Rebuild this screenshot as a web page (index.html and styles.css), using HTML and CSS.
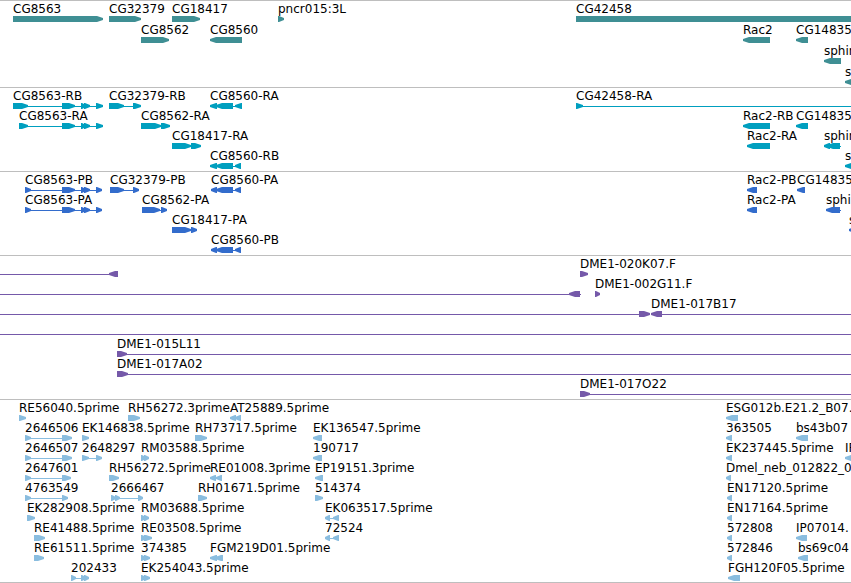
FILE: index.html
```
<!DOCTYPE html>
<html lang="en">
<head>
<meta charset="utf-8">
<title>Genome tracks</title>
<link rel="stylesheet" href="styles.css">
</head>
<body>
<main class="browser">
  <section class="track genes" id="genes" aria-label="Genes"></section>
  <section class="track transcripts" id="transcripts" aria-label="Transcripts"></section>
  <section class="track proteins" id="proteins" aria-label="Coding sequences"></section>
  <section class="track clones" id="clones" aria-label="Clones"></section>
  <section class="track ests" id="ests" aria-label="ESTs"></section>
</main>
<script src="script.js"></script>
</body>
</html>
```

FILE: styles.css
```
body {
  margin: 0;
  background: #fff;
  color: #000;
  font-family: "DejaVu Sans", sans-serif;
  font-size: 12px;
  line-height: 16px;
}

.browser {
  display: flex;
  flex-direction: column;
  border-bottom: 1px solid #bebebe;
}

.track {
  --row: 20px;
  display: grid;
  grid-auto-rows: var(--row);
  padding-bottom: 3px;
  border-top: 1px solid #bebebe;
  overflow: hidden;
}

.genes {
  --row: 21px;
  padding-bottom: 2px;
  color: #3f8f94;
}

.transcripts { color: #009fbf; }
.proteins { color: #336ccc; }
.clones { color: #7559a9; }

.ests {
  padding-bottom: 2px;
  color: #8abddf;
}

.row {
  position: relative;
}

.shapes {
  display: block;
  width: 100%;
  height: 22px;
  overflow: visible;
  fill: currentColor;
}

.label {
  position: absolute;
  top: 0;
  color: #000;
  white-space: nowrap;
}
```

FILE: script.js
```
// Each feature: [label position, name, strand, exons, optional line extent]
const END = 4000;
const tracks = {
  genes: [
    [[13, "CG8563", 1, [[13, 103]]], [109, "CG32379", 1, [[109, 141]]], [172, "CG18417", 1, [[172, 200]]],
     [278, "pncr015:3L", 1, [[278, 284]]], [576, "CG42458", 1, [[576, END]]]],
    [[141, "CG8562", 1, [[141, 169]]], [210, "CG8560", -1, [[210, 242]]], [743, "Rac2", -1, [[743, 770]]],
     [796, "CG14835", -1, [[796, 808]]]],
    [[824, "sphin", -1, [[824, 841]]]],
    [[845, "s", -1, [[845, 856]]]]
  ],
  transcripts: [
    [[13, "CG8563-RB", 1, [[13, 28], [62, 75], [81, 86], [84, 90], [96, 103]]],
     [109, "CG32379-RB", 1, [[109, 124], [133, 141]]],
     [210, "CG8560-RA", -1, [[210, 217], [216, 233], [235, 242]]],
     [576, "CG42458-RA", 1, [[576, 583]], [576, END]]],
    [[19, "CG8563-RA", 1, [[19, 28], [62, 75], [81, 86], [84, 90], [96, 103]]],
     [141, "CG8562-RA", 1, [[141, 161], [161, 170]]],
     [743, "Rac2-RB", -1, [[743, 770]]], [796, "CG14835", -1, [[796, 808]]]],
    [[172, "CG18417-RA", 1, [[172, 191], [191, 201]]], [747, "Rac2-RA", -1, [[747, 770]]],
     [824, "sphin", -1, [[824, 830], [827, 840]], [824, 841]]],
    [[210, "CG8560-RB", -1, [[210, 217], [216, 233], [235, 241]]], [845, "s", -1, [[845, 856]]]]
  ],
  proteins: [
    [[25, "CG8563-PB", 1, [[25, 31], [62, 75], [81, 86], [84, 90], [96, 102]]],
     [110, "CG32379-PB", 1, [[110, 124], [133, 139]]],
     [211, "CG8560-PA", -1, [[211, 217], [216, 233], [235, 241]]],
     [747, "Rac2-PB", -1, [[747, 757]]], [797, "CG14835", -1, [[797, 805]]]],
    [[25, "CG8563-PA", 1, [[25, 31], [62, 75], [81, 86], [84, 90], [96, 102]]],
     [142, "CG8562-PA", 1, [[142, 160], [161, 167]]],
     [747, "Rac2-PA", -1, [[747, 757]]], [826, "sphi", -1, [[826, 840]], [826, 841]]],
    [[172, "CG18417-PA", 1, [[172, 191], [191, 197]]], [849, "s", -1, [[849, 860]]]],
    [[211, "CG8560-PB", -1, [[211, 217], [216, 233], [235, 241]]]]
  ],
  clones: [
    [[0, "", -1, [[109, 118]], [0, 118]], [580, "DME1-020K07.F", 1, [[580, 588]]]],
    [[0, "", -1, [[569, 580]], [0, 581]], [595, "DME1-002G11.F", 1, [[595, 600]]]],
    [[0, "", 1, [[639, 650]], [0, 650]], [651, "DME1-017B17", -1, [[651, 662]], [651, END]]],
    [[0, "", 1, [], [0, END]]],
    [[117, "DME1-015L11", 1, [[117, 127]], [117, END]]],
    [[117, "DME1-017A02", 1, [[117, 128]], [117, END]]],
    [[580, "DME1-017O22", 1, [[580, 590]], [580, END]]]
  ],
  ests: [
    [[19, "RE56040.5prime", 1, [[19, 26]]], [128, "RH56272.3prime", 1, [[128, 140]]],
     [230, "AT25889.5prime", -1, [[230, 236], [235, 241]]], [726, "ESG012b.E21.2_B07.", -1, [[726, 738]]]],
    [[25, "2646506", 1, [[25, 31], [62, 72]]], [82, "EK146838.5prime", 1, [[82, 89]]],
     [195, "RH73717.5prime", 1, [[195, 207]]], [313, "EK136547.5prime", -1, [[313, 322]]],
     [726, "363505", -1, [[726, 732]]], [796, "bs43b07", -1, [[796, 808]]]],
    [[25, "2646507", 1, [[25, 31], [62, 72]]], [82, "2648297", 1, [[82, 89], [96, 102]]],
     [141, "RM03588.5prime", 1, [[141, 146], [144, 149]]], [313, "190717", -1, [[313, 322]]],
     [726, "EK237445.5prime", -1, [[726, 732]]], [845, "IP", -1, [[845, 856]]]],
    [[25, "2647601", 1, [[25, 31], [62, 71]]], [109, "RH56272.5prime", 1, [[109, 119]]],
     [210, "RE01008.3prime", -1, [[210, 216], [216, 222]]], [315, "EP19151.3prime", -1, [[315, 323]]],
     [726, "Dmel_neb_012822_0", -1, [[726, 731]]]],
    [[25, "4763549", 1, [[25, 31], [62, 68]]], [111, "2666467", 1, [[111, 116], [115, 120], [138, 143]]],
     [198, "RH01671.5prime", 1, [[198, 207]]], [315, "514374", 1, [[315, 323]]],
     [727, "EN17120.5prime", -1, [[727, 732]]]],
    [[27, "EK282908.5prime", 1, [[27, 35]]], [141, "RM03688.5prime", 1, [[141, 146], [144, 149]]],
     [325, "EK063517.5prime", -1, [[325, 330], [333, 339]]], [727, "EN17164.5prime", -1, [[727, 732]]]],
    [[34, "RE41488.5prime", 1, [[34, 45]]], [141, "RE03508.5prime", 1, [[141, 147], [144, 152]]],
     [325, "72524", -1, [[325, 330], [333, 339]]], [727, "572808", -1, [[727, 732]]],
     [796, "IP07014.", -1, [[796, 807]]]],
    [[34, "RE61511.5prime", 1, [[34, 44]]], [141, "374385", 1, [[141, 146], [144, 150]]],
     [210, "FGM219D01.5prime", -1, [[210, 217], [215, 223]]], [727, "572846", -1, [[727, 732]]],
     [798, "bs69c04", -1, [[798, 808]]]],
    [[71, "202433", 1, [[71, 76], [81, 86], [84, 89]]], [141, "EK254043.5prime", 1, [[141, 146], [144, 150]]],
     [728, "FGH120F05.5prime", -1, [[728, 740]]]]
  ]
};

const TOP = 15, MIDDLE = 18, BOTTOM = 21, HEAD = 6;

// Block arrow pointing along the strand, with a blunt tip; short exons are all arrowhead.
function arrow([start, end], strand) {
  const head = Math.min(HEAD, end - start - 1);
  const tip = strand > 0 ? end : start;
  const neck = tip - strand * head;
  const tail = strand > 0 ? start : end;
  return `M${tail} ${TOP}H${neck}L${tip} ${MIDDLE - 1}V${MIDDLE + 1}L${neck} ${BOTTOM}H${tail}Z`;
}

function intron([start, end]) {
  return `<rect x="${start}" y="${MIDDLE}" width="${end - start}" height="1"/>`;
}

function drawFeature([, , strand, exons, extent]) {
  const span = extent || (exons.length > 1 ? [exons[0][0], exons[exons.length - 1][1]] : null);
  return (span ? intron(span) : "") + exons.map(e => `<path d="${arrow(e, strand)}"/>`).join("");
}

for (const [id, rows] of Object.entries(tracks)) {
  document.getElementById(id).innerHTML = rows.map(features =>
    `<div class="row"><svg class="shapes" aria-hidden="true">${features.map(drawFeature).join("")}</svg>` +
    features.filter(f => f[1]).map(f => `<span class="label" style="left:${f[0]}px">${f[1]}</span>`).join("") +
    `</div>`).join("");
}
```
